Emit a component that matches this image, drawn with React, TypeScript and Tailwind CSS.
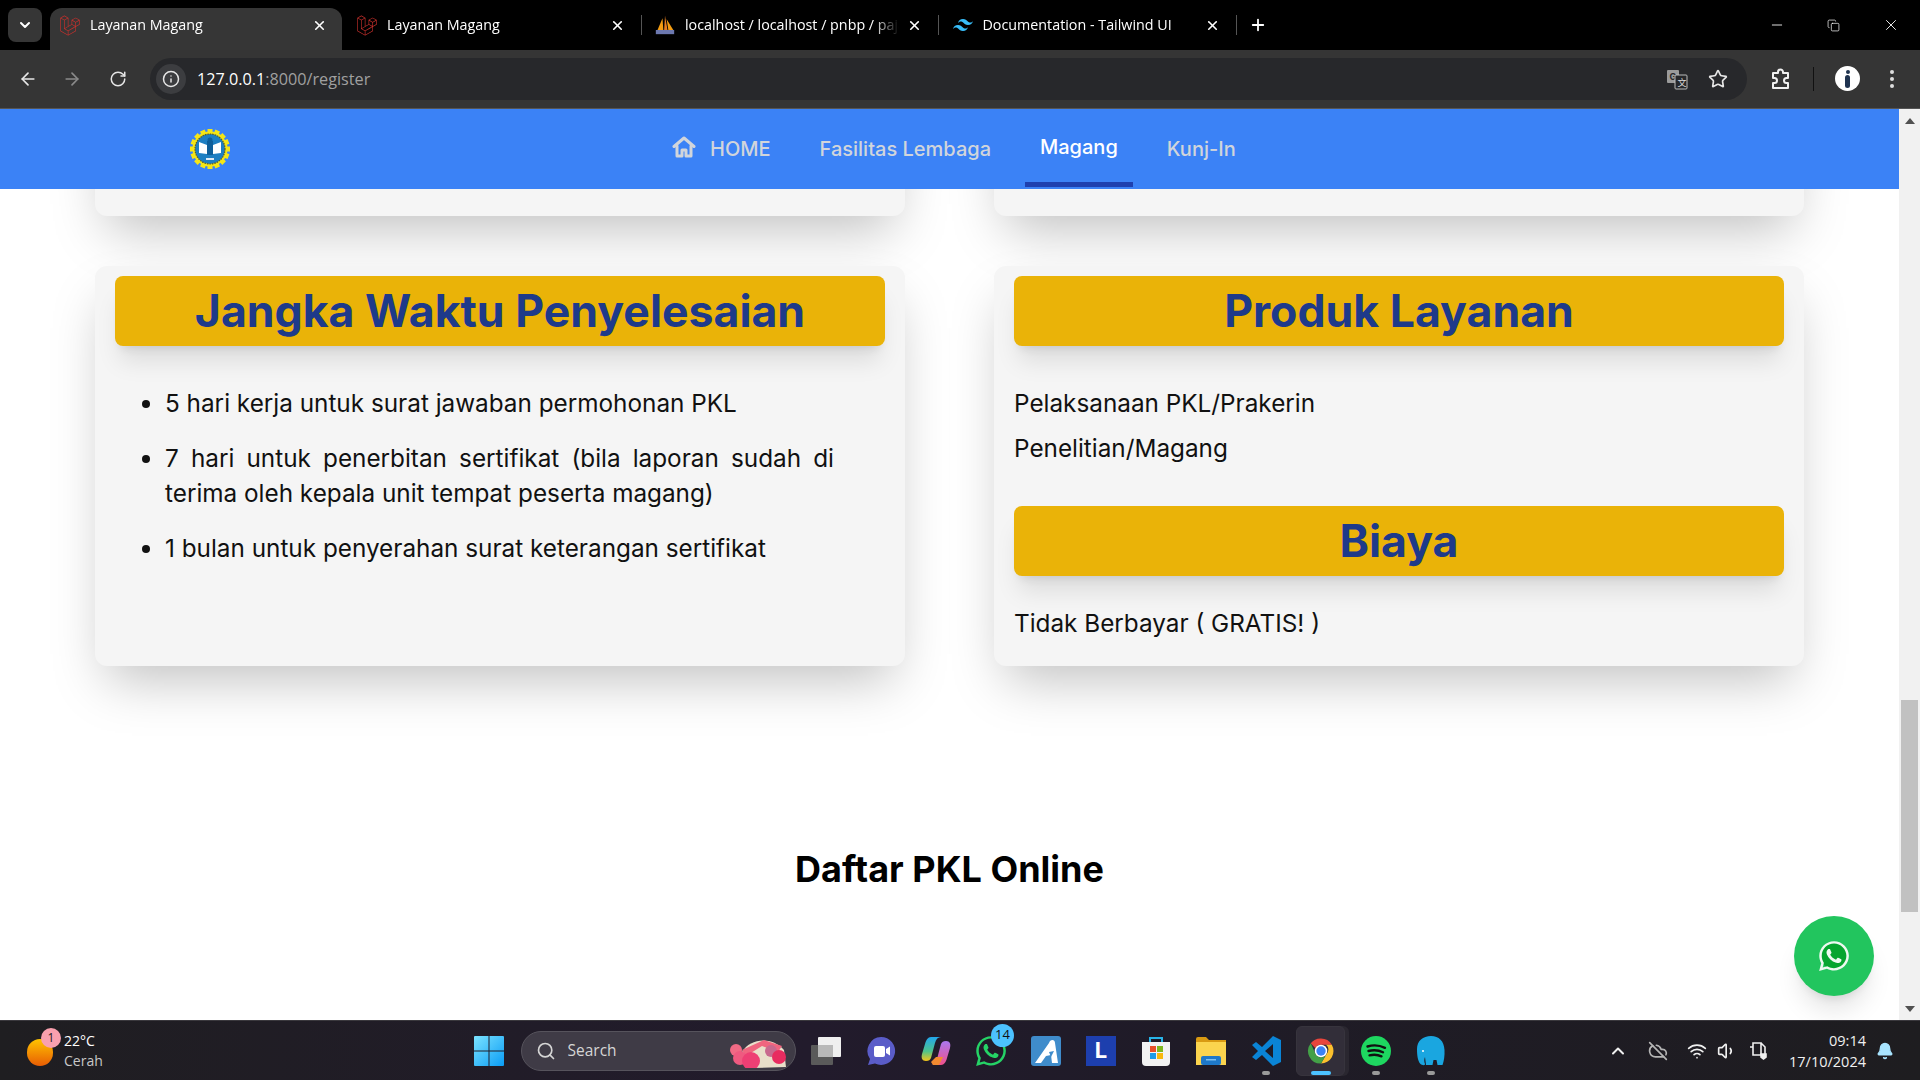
import React from "react";
import { ArrowLeft, ArrowRight, RotateCw, Info, Star, X, Plus, Minus, ChevronDown, ChevronUp, CloudOff, Wifi, Volume1, Bell, Search, Copy } from "lucide-react";
import { SiLaravel, SiTailwindcss } from "react-icons/si";
import { FaWhatsapp } from "react-icons/fa";

const Pma = () => (
  <svg width="24" height="24" viewBox="0 0 24 24">
    <path d="M3 18 L9 4 L10 18Z" fill="#f39c12" />
    <path d="M11 18 L12 1 L15 18Z" fill="#e67e22" />
    <path d="M16 18 L14 5 L22 18Z" fill="#f39c12" />
    <rect x="1" y="18" width="22" height="5" fill="#6c78af" />
  </svg>
);

const tabs = [
  { t: "Layanan Magang", i: <SiLaravel size={21} color="#c9302c" />, c: "w-[292px] rounded-t-xl bg-[#363636] pl-[10px] pr-[15px]" },
  { t: "Layanan Magang", i: <SiLaravel size={21} color="#c9302c" />, c: "w-[303px] pl-[15px] pr-[20px]" },
  { t: "localhost / localhost / pnbp / pajak", i: <Pma />, c: "w-[297.5px] pl-[10px] pr-[21px]" },
  { t: "Documentation - Tailwind UI", i: <SiTailwindcss size={20} color="#38bdf8" />, c: "w-[297.5px] pl-[10px] pr-[20px]" },
];

function TabStrip() {
  return (
    <div className="flex h-[50px] items-start bg-black pl-2 text-white [font-family:'Open_Sans',sans-serif]">
      <div className="mt-2 flex h-[34px] w-[34px] items-center justify-center rounded-lg bg-[#363636]">
        <ChevronDown size={16} strokeWidth={3} />
      </div>
      <div className="ml-2 flex h-full">
        {tabs.map((tab, idx) => (
          <div key={idx} className={`mt-2 flex h-[42px] items-center pb-[8px] ${tab.c}`}>
            <span className="flex w-[20px] shrink-0 items-center justify-center">{tab.i}</span>
            <span className="ml-[10px] min-w-0 flex-1 overflow-hidden whitespace-nowrap text-[14.3px] [mask-image:linear-gradient(90deg,#000_88%,transparent)]">{tab.t}</span>
            <X size={15} strokeWidth={2.6} className="ml-2 shrink-0" />
            {idx > 0 && <span className="ml-[16px] -mr-[17px] h-[20px] w-px shrink-0 bg-[#555]" />}
          </div>
        ))}
        <div className="mt-2 flex h-[42px] items-center pb-[8px] pl-[9px]">
          <Plus size={18} strokeWidth={2.4} />
        </div>
      </div>
      <div className="ml-auto mt-2 flex h-[34px] items-center pr-[20px] text-white">
        <Minus size={16} strokeWidth={1.3} />
        <Copy size={13} strokeWidth={1.3} className="ml-[42px]" />
        <X size={18} strokeWidth={1.2} className="ml-[42px]" />
      </div>
    </div>
  );
}

const Extension = () => (
  <svg width="22" height="22" viewBox="0 0 22 22" fill="none" stroke="#f0f0f0" strokeWidth="2" strokeLinejoin="round">
    <path d="M3 5h5V4a2.500 2.500 0 0 1 5 0v1h5v5h-1.500a2.500 2.500 0 0 0 0 5H18v5H3v-5h1.500a2.500 2.500 0 0 0 0-5H3z" />
  </svg>
);

function Toolbar() {
  return (
    <div className="flex h-[59px] items-center border-b border-[#555] bg-[#353535] pb-px text-[#e6e6e6]">
      <ArrowLeft size={20} className="ml-[18px]" />
      <ArrowRight size={20} className="ml-[24px] text-[#8a8a8a]" />
      <RotateCw size={18} className="ml-[27px]" />
      <div className="ml-[23px] flex h-[42px] w-[1597px] items-center rounded-full bg-[#27282b] pl-[6px] pr-[19px]">
        <span className="flex h-[30px] w-[30px] items-center justify-center rounded-full bg-[#3c3d40]">
          <Info size={18} />
        </span>
        <span className="ml-[11px] pt-[2px] text-[16.2px] [font-family:'Open_Sans',sans-serif]">
          <span className="text-white">127.0.0.1</span>
          <span className="text-[#a0a0a0]">:8000/register</span>
        </span>
        <svg width="22" height="22" viewBox="0 0 22 22" className="ml-auto">
          <rect x="1" y="2" width="12" height="13" rx="1" fill="#9b9b9b" />
          <text x="3.5" y="12" fontSize="9" fontWeight="700" fill="#27282b" fontFamily="Inter">G</text>
          <rect x="9" y="7" width="12" height="14" rx="1" fill="#27282b" stroke="#bbb" />
          <text x="11.5" y="18" fontSize="9" fill="#ddd" fontFamily="'Noto Sans CJK SC'">文</text>
        </svg>
        <Star size={20} className="ml-[20px]" />
      </div>
      <span className="ml-[23px] flex"><Extension /></span>
      <span className="ml-[21px] h-[24px] w-px bg-[#111]" />
      <span className="relative ml-[21px] flex h-[25px] w-[25px] flex-col items-center justify-center rounded-full bg-white">
        <span className="h-[4px] w-[4px] rounded-full bg-[#1f3350]" />
        <span className="mt-px h-[13px] w-[5px] rounded-sm bg-[#1f3350]" />
      </span>
      <span className="ml-[30px] flex flex-col gap-[3px]">
        <span className="h-[4px] w-[4px] rounded-full bg-[#ddd]" />
        <span className="h-[4px] w-[4px] rounded-full bg-[#ddd]" />
        <span className="h-[4px] w-[4px] rounded-full bg-[#ddd]" />
      </span>
    </div>
  );
}

function Logo() {
  const teeth = Array.from({ length: 16 }, (_, i) => i * 22.5);
  return (
    <svg width="40" height="40" viewBox="0 0 40 40">
      {teeth.map((a) => (
        <rect key={a} x="17.5" y="0" width="5" height="4" fill="#f5e616" transform={`rotate(${a} 20 20)`} />
      ))}
      <circle cx="20" cy="20" r="17.5" fill="#f5e616" />
      <circle cx="20" cy="20" r="15" fill="#1e7fc2" stroke="#5a5a22" strokeWidth="1.2" strokeDasharray="1.5 1" />
      <path d="M9 13 L17 16 V25 L9 24Z M31 13 L23 16 V25 L31 24Z" fill="#fff" />
      <path d="M17 12h6v14h-6z" fill="#0f5f9a" />
      <circle cx="20" cy="11" r="2.500" fill="#0f5f9a" />
      <rect x="16" y="29" width="8" height="2" fill="#dfeaf5" />
    </svg>
  );
}

const HomeIcon = () => (
  <svg width="24" height="24" viewBox="0 0 24 24" fill="none" stroke="currentColor" strokeWidth="3" strokeLinejoin="round" strokeLinecap="round" className="-mt-[5px]">
    <path d="M2 11.500 L12 3 L22 11.500" />
    <path d="M5 11 V21 H10 V15 H14 V21 H19 V11" />
  </svg>
);

function Nav() {
  return (
    <nav className="relative z-10 flex h-[80px] shrink-0 items-center bg-[#3b82f6] pl-[190px] text-[20px] font-medium text-[#d1d5db]">
      <Logo />
      <div className="ml-[427px] flex h-full items-center gap-x-[19px]">
        <span className="flex h-full items-center gap-[14px] px-[15px]">
          <HomeIcon />
          HOME
        </span>
        <span className="flex h-full items-center px-[15px]">Fasilitas Lembaga</span>
        <span className="flex h-[78px] items-center self-start border-b-[5px] border-[#1e40af] px-[15px] pt-[3px] text-white">Magang</span>
        <span className="flex h-full items-center px-[15px]">Kunj-In</span>
      </div>
    </nav>
  );
}

const Banner = ({ children }: { children: React.ReactNode }) => (
  <h2 className="flex h-[70px] items-center justify-center rounded-lg bg-[#eab308] text-[44.6px] font-bold text-[#1e3a8a] shadow-xl">{children}</h2>
);

const cardClass = "rounded-xl bg-[#f5f5f5] shadow-[0_25px_50px_-12px_rgba(0,0,0,0.25)]";

function Content() {
  return (
    <div className="relative min-h-0 flex-1 overflow-hidden bg-white [font-family:Inter,sans-serif]">
      <div className="px-[95px]">
        <div className="-mt-[373px] grid grid-cols-2 gap-x-[89px]">
          <div className={`h-[400px] ${cardClass}`} />
          <div className={`h-[400px] ${cardClass}`} />
        </div>
        <div className="mt-[50px] grid grid-cols-2 gap-x-[89px]">
          <div className={`h-[400px] px-[20px] pt-[10px] ${cardClass}`}>
            <Banner>Jangka Waktu Penyelesaian</Banner>
            <ul className="ml-[30px] mr-[51px] mt-[40px] list-disc pl-[20px] text-[24.3px] leading-[35.5px] text-[#111]">
              <li className="mb-[19px] text-justify">5 hari kerja untuk surat jawaban permohonan PKL</li>
              <li className="mb-[19px] text-justify">7 hari untuk penerbitan sertifikat (bila laporan sudah di terima oleh kepala unit tempat peserta magang)</li>
              <li className="text-justify">1 bulan untuk penyerahan surat keterangan sertifikat</li>
            </ul>
          </div>
          <div className={`h-[400px] px-[20px] pt-[10px] ${cardClass}`}>
            <Banner>Produk Layanan</Banner>
            <div className="mt-[39px] text-[24.3px] leading-[36px] text-[#111]">
              <p>Pelaksanaan PKL/Prakerin</p>
              <p className="mt-[9px]">Penelitian/Magang</p>
            </div>
            <div className="mt-[40px]">
              <Banner>Biaya</Banner>
            </div>
            <p className="mt-[29px] text-[24.3px] leading-[36px] text-[#111]">Tidak Berbayar ( GRATIS! )</p>
          </div>
        </div>
        <h1 className="mt-[178px] text-center text-[36px] font-bold leading-[50px] text-black">Daftar PKL Online</h1>
      </div>
      <div className="absolute bottom-[24px] right-[25px] flex h-[80px] w-[80px] items-center justify-center rounded-full bg-[#22c55e] shadow-xl">
        <span className="absolute h-[27px] w-[27px] rounded-full bg-[#06a52f]" />
        <FaWhatsapp size={34} color="#eef9f1" className="relative" />
      </div>
    </div>
  );
}

function Scrollbar() {
  return (
    <div className="flex w-[21px] shrink-0 flex-col items-center bg-[#f1f1f1]">
      <span className="mt-[9px] h-0 w-0 border-x-[5px] border-b-[6px] border-x-transparent border-b-[#505050]" />
      <span className="mt-[576px] h-[212px] w-[17px] bg-[#c1c1c1]" />
      <span className="mt-[94px] h-0 w-0 border-x-[5px] border-t-[6px] border-x-transparent border-t-[#505050]" />
    </div>
  );
}

const Slot = ({ children, dot, active }: { children: React.ReactNode; dot?: boolean; active?: boolean }) => (
  <div className="relative flex h-[50px] w-[55px] items-center justify-center">
    {active && <span className="absolute inset-y-0 left-[2px] right-[4px] rounded-md border border-[#37343d] bg-[#322e39] shadow-[4px_0_0_#2a2730]" />}
    <span className="relative flex items-center justify-center">{children}</span>
    {dot && <span className="absolute bottom-[1px] h-[4px] w-[8px] rounded-full bg-[#9a9a9a]" />}
    {active && <span className="absolute bottom-[1px] h-[4px] w-[20px] rounded-full bg-[#4cc2ff]" />}
  </div>
);

const WinLogo = () => (
  <svg width="30" height="30" viewBox="0 0 30 30">
    <defs>
      <linearGradient id="w" x1="0" y1="0" x2="1" y2="1">
        <stop offset="0" stopColor="#7be3ff" />
        <stop offset="1" stopColor="#0a9cf5" />
      </linearGradient>
    </defs>
    <path d="M0 1a1 1 0 0 1 1-1h13.500v14.500H0z M15.500 0H29a1 1 0 0 1 1 1v13.500H15.500z M0 15.500h14.500V30H1a1 1 0 0 1-1-1z M15.500 15.500H30V29a1 1 0 0 1-1 1H15.500z" fill="url(#w)" />
  </svg>
);

const Chrome = () => (
  <svg width="30" height="30" viewBox="0 0 48 48">
    <path d="M24 4a20 20 0 0 1 17.300 10H24a10 10 0 0 0-9 5.600L7.600 11.600A20 20 0 0 1 24 4z" fill="#e8453c" />
    <path d="M41.300 14A20 20 0 0 1 24 44l8.700-15a10 10 0 0 0-.5-15z" fill="#fbc02d" />
    <path d="M24 44A20 20 0 0 1 7.600 11.600L15.500 29a10 10 0 0 0 9 5 10 10 0 0 0 8.200-5z" fill="#43a047" />
    <circle cx="24" cy="24" r="10" fill="#fff" />
    <circle cx="24" cy="24" r="7.500" fill="#3b82f6" />
  </svg>
);

const VsCode = () => (
  <svg width="30" height="30" viewBox="0 0 30 30">
    <path d="M22 0l8 4v22l-8 4-11-11-6 5-4-3 6-6-6-6 4-3 6 5z M22 8l-8 7 8 7z" fill="#0a84d6" fillRule="evenodd" />
  </svg>
);

function Taskbar() {
  return (
    <div className="grid h-[60px] shrink-0 grid-cols-[1fr_auto_1fr] items-center border-t border-[#3a383d] bg-[linear-gradient(90deg,#1f1e21,#221b2c_42%,#1f1b27_62%,#1e1d20)] text-white [font-family:'Open_Sans',sans-serif]">
      <div className="flex items-center pl-[27px]">
        <span className="relative block h-[30px] w-[26px]">
          <span className="absolute bottom-0 left-0 h-[27px] w-[26px] rounded-full bg-[linear-gradient(180deg,#ffc400,#e85d04)]" />
          <span className="absolute -right-[8px] -top-[8px] flex h-[20px] w-[20px] items-center justify-center rounded-full bg-[#f9a0ae] text-[12px] text-[#222]">1</span>
        </span>
        <div className="ml-[11px] text-[14px] leading-[20px]">
          <div className="text-white">22°C</div>
          <div className="text-[#c8c8c8]">Cerah</div>
        </div>
      </div>
      <div className="flex items-center">
        <Slot><WinLogo /></Slot>
        <div className="relative ml-[4px] mr-[3px] flex h-[40px] w-[275px] items-center rounded-full border border-[#56535c] bg-[#3f3b46] pl-[14px] text-[15.5px] text-[#d5d5d5]">
          <Search size={20} strokeWidth={2} />
          <span className="ml-[12px]">Search</span>
          <svg width="60" height="32" viewBox="0 0 60 32" className="absolute right-[7px] top-[4px]">
            <path d="M14 16 C22 2 44 0 56 14 L58 31 L24 32Z" fill="#e9dfca" />
            <path d="M14 14 L36 4 L54 10 L50 16 L34 10 L18 20Z" fill="#f0657f" />
            <circle cx="8" cy="14" r="6" fill="#f06a85" />
            <circle cx="12" cy="22" r="7" fill="#ef5a80" />
            <circle cx="23" cy="25" r="9" fill="#ee3f74" />
            <circle cx="43" cy="15" r="6" fill="#c8698e" />
            <circle cx="51" cy="21" r="7" fill="#e82c60" />
          </svg>
        </div>
        <Slot>
          <svg width="30" height="28" viewBox="0 0 30 28">
            <rect x="0" y="8" width="22" height="20" rx="1" fill="#5a5a5a" />
            <rect x="7" y="0" width="23" height="20" rx="1" fill="#efefef" />
            <rect x="7" y="8" width="15" height="12" fill="#b8b8b8" />
          </svg>
        </Slot>
        <Slot>
          <svg width="30" height="30" viewBox="0 0 30 30">
            <path d="M15 1a14 14 0 1 1-6 26.600L2 29l2-6A14 14 0 0 1 15 1z" fill="#5a5cc8" />
            <rect x="8" y="10" width="11" height="11" rx="2" fill="#fff" />
            <path d="M20 13l4-2.500v9L20 17z" fill="#fff" />
          </svg>
        </Slot>
        <Slot>
          <svg width="30" height="30" viewBox="0 0 30 30">
            <defs>
              <linearGradient id="c1" x1="0" y1="0" x2="0" y2="1"><stop offset="0" stopColor="#22a7ee" /><stop offset="0.6" stopColor="#4fc38a" /><stop offset="1" stopColor="#f5c518" /></linearGradient>
              <linearGradient id="c2" x1="0" y1="0" x2="0" y2="1"><stop offset="0" stopColor="#a978f0" /><stop offset="1" stopColor="#f0508a" /></linearGradient>
            </defs>
            <path d="M10 1h10c-3 0-5 2-6 6l-4 15c-1 2-2 3-5 3-4 0-5-3-4-7l3-10c1-4 3-7 6-7z" fill="url(#c1)" />
            <path d="M20 29H10c3 0 5-2 6-6l4-15c1-2 2-3 5-3 4 0 5 3 4 7l-3 10c-1 4-3 7-6 7z" fill="url(#c2)" />
            <path d="M10 26l5-5h7l-4 8h-6z" fill="#f28a30" />
          </svg>
        </Slot>
        <Slot>
          <span className="relative flex">
            <FaWhatsapp size={34} color="#25d366" />
            <span className="absolute -right-[6px] -top-[10px] flex h-[23px] w-[23px] items-center justify-center rounded-full bg-[#4cc2ff] text-[13px] text-[#111]">14</span>
          </span>
        </Slot>
        <Slot>
          <svg width="30" height="30" viewBox="0 0 30 30">
            <rect width="30" height="30" rx="3" fill="#3f8ccb" />
            <path d="M4 27 L18 7 C19 3 24 3 24 7 L27 27 H21 L20 19 L15 20 L10 27Z" fill="#fff" />
            <path d="M18 16 L23 15 L20 21Z" fill="#3f8ccb" />
          </svg>
        </Slot>
        <Slot>
          <span className="flex h-[30px] w-[30px] items-center justify-center bg-[#1d3fae] text-[22px] font-bold text-white [font-family:Inter,sans-serif]">L</span>
        </Slot>
        <Slot>
          <svg width="30" height="30" viewBox="0 0 30 30">
            <path d="M9 6V2h12v4" fill="none" stroke="#28b4e8" strokeWidth="2" />
            <path d="M1 6h28v20a4 4 0 0 1-4 4H5a4 4 0 0 1-4-4z" fill="#f2f2f2" />
            <rect x="9" y="10" width="6" height="6" fill="#e8502a" />
            <rect x="16" y="10" width="6" height="6" fill="#7eb81e" />
            <rect x="9" y="17" width="6" height="6" fill="#1e9be8" />
            <rect x="16" y="17" width="6" height="6" fill="#f8b80c" />
          </svg>
        </Slot>
        <Slot>
          <svg width="30" height="28" viewBox="0 0 30 28">
            <path d="M0 2a2 2 0 0 1 2-2h8l3 3h17v8H0z" fill="#d99a12" />
            <rect y="5" width="30" height="23" fill="#fbd44e" />
            <rect x="5" y="19" width="20" height="9" rx="2" fill="#1e78c8" />
            <rect x="10" y="22" width="10" height="1.500" fill="#7cc0f0" />
          </svg>
        </Slot>
        <Slot dot><VsCode /></Slot>
        <Slot active><Chrome /></Slot>
        <Slot dot>
          <svg width="30" height="30" viewBox="0 0 30 30">
            <circle cx="15" cy="15" r="15" fill="#1ed760" />
            <path d="M6.500 10.500c6-1.800 12-1.300 17.500 1.300M7.500 15c5-1.300 10-1 14.500 1.300M8.500 19.300c4-1 8.200-.8 12 1" fill="none" stroke="#111" strokeWidth="2.400" strokeLinecap="round" />
          </svg>
        </Slot>
        <Slot dot>
          <svg width="28" height="30" viewBox="0 0 28 30">
            <path d="M14 0C22 0 27 5 27.500 14c.3 6-.5 11-2 15h-5l-1-5h-3l-1 5H9l-1-8c-1 2-1 5 0 7 .5 1.500-3 1.500-4.500 0C.5 25 0 18 0 13 0 5 6 0 14 0z" fill="#1aa6e0" />
            <circle cx="6" cy="15" r="1" fill="#fff" />
          </svg>
        </Slot>
      </div>
      <div className="flex items-center justify-end pr-[26px] text-[#f0f0f0]">
        <ChevronUp size={20} strokeWidth={2.4} />
        <CloudOff size={20} className="ml-[20px] text-[#b5b5b5]" />
        <Wifi size={20} className="ml-[19px]" />
        <Volume1 size={20} className="ml-[10px]" />
        <svg width="20" height="20" viewBox="0 0 20 20" className="ml-[11px]" fill="none" stroke="#f0f0f0" strokeWidth="1.600">
          <path d="M5 2h8v12H5z M2 6h3 M13 2l4 4v7" />
          <path d="M13 13l5 0v3l-2.500 2-2.500-2z" fill="#f0f0f0" />
        </svg>
        <div className="ml-[21px] text-right text-[14.5px] leading-[21px]">
          <div>09:14</div>
          <div>17/10/2024</div>
        </div>
        <Bell size={18} fill="#a8e4ff" color="#a8e4ff" className="ml-[10px]" />
      </div>
    </div>
  );
}

export default function App() {
  return (
    <div className="flex h-screen w-full flex-col overflow-hidden bg-white">
      <TabStrip />
      <Toolbar />
      <div className="flex min-h-0 flex-1">
        <div className="flex min-w-0 flex-1 flex-col [font-family:Inter,sans-serif]">
          <Nav />
          <Content />
        </div>
        <Scrollbar />
      </div>
      <Taskbar />
    </div>
  );
}
